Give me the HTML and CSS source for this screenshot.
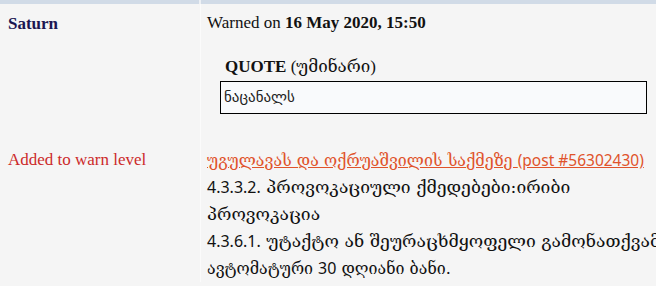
FILE: index.html
```html
<!DOCTYPE html>
<html lang="ka">
<head>
    <meta charset="UTF-8">
    <title>Warn log</title>
    <link rel="stylesheet" href="styles.css">
</head>
<body>
    <div class="warn-table">
        <div class="row head">
            <div class="cell-left"></div>
            <div class="cell-right"></div>
        </div>
        <div class="row">
            <div class="cell-left"><span class="member">Saturn</span></div>
            <div class="cell-right">
                <div class="warned">Warned on <b>16 May 2020, 15:50</b></div>
                <div class="quote-title"><b>QUOTE</b> (უმინარი)</div>
                <div class="quote-box">ნაცანალს</div>
            </div>
        </div>
        <div class="row reason-row">
            <div class="cell-left"><span class="level">Added to warn level</span></div>
            <div class="cell-right reason">
                <a href="#" class="post-link">უგულავას და ოქრუაშვილის საქმეზე <span class="num">(post #56302430)</span></a>
                <div class="line"><span class="num">4.3.3.2.</span> პროვოკაციული ქმედებები:ირიბი</div>
                <div class="line">პროვოკაცია</div>
                <div class="line"><span class="num">4.3.6.1.</span> უტაქტო ან შეურაცხმყოფელი გამონათქვამები</div>
                <div class="line last">ავტომატური <span class="num">30</span> დღიანი ბანი.</div>
            </div>
        </div>
    </div>
</body>
</html>
```

FILE: styles.css
```css
body {
    margin: 0;
    background-color: #f5f5f5;
    font-family: "Liberation Serif", "DejaVu Serif", serif;
    font-size: 17px;
    color: #111;
    overflow: hidden;
}
.warn-table {
    display: flex;
    flex-direction: column;
}
.row {
    display: flex;
}
.cell-left {
    width: 201px;
    flex-shrink: 0;
    padding-left: 8px;
    box-sizing: border-box;
    border-right: 1px solid #fbfbfb;
}
.cell-right {
    flex: 1;
    padding-left: 6px;
    white-space: nowrap;
}
.head .cell-left,
.head .cell-right {
    height: 4px;
    background-color: #d1dbe7;
}
.head .cell-left {
    border-right: 2px solid #eef1f5;
}
.member {
    display: block;
    margin-top: 10px;
    font-weight: bold;
    color: #1b1652;
}
.warned {
    margin-top: 9px;
}
.quote-title {
    margin: 23px 0 0 18px;
}
.quote-box {
    margin: 4px 9px 0 13px;
    height: 31px;
    border: 1px solid #000;
    background-color: #f9fafc;
    padding-left: 3px;
    line-height: 31px;
    font-family: "DejaVu Sans", sans-serif;
    font-size: 15px;
    color: #222;
}
.reason-row .cell-left,
.reason {
    padding-top: 33px;
    line-height: 26px;
}
.level {
    color: #cc2a2a;
}
.reason {
    font-family: "DejaVu Serif", serif;
    font-size: 17.5px;
    line-height: 27px;
}
.reason .num {
    font-family: "Noto Sans", sans-serif;
    font-size: 16px;
}
.reason .last {
    font-size: 16px;
}
.post-link {
    display: block;
    color: #e0532b;
    font-size: 16px;
    line-height: 26px;
}
.post-link .num {
    font-size: 15.5px;
}
```
